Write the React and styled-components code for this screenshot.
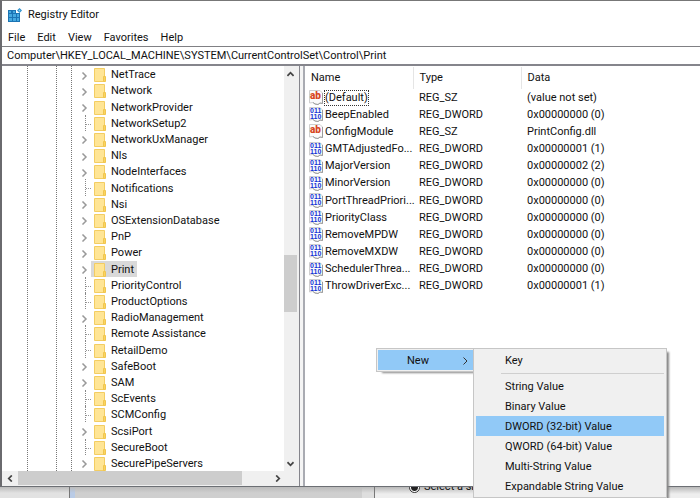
import React, { useState } from 'react';
import styled, { createGlobalStyle, css } from 'styled-components';

const GlobalStyle = createGlobalStyle`
    * {
        box-sizing: border-box;
    }
    body {
        margin: 0;
        overflow: hidden;
        font-family: Roboto, "Noto Sans", sans-serif;
        font-size: 11px;
        line-height: 16px;
        color: #111;
    }
    button, input {
        font: inherit;
        color: inherit;
    }
    svg {
        flex: none;
    }
`;

const Desktop = styled.div`
    position: relative;
    height: 100vh;
    display: flex;
    flex-direction: column;
    overflow: hidden;
    background: #d4d4d4;
`;

const EditorWindow = styled.main`
    flex: 1;
    min-height: 0;
    display: flex;
    flex-direction: column;
    border-top: 1px solid #777;
    border-left: 2px solid #6a6a6e;
    border-bottom: 1px solid #6c6f74;
    background: #fff;
`;

const TitleBar = styled.header`
    display: flex;
    align-items: center;
    gap: 5px;
    height: 27px;
    padding-left: 6px;
`;

const Title = styled.h1`
    margin: 0;
    font-size: 11px;
    font-weight: 400;
`;

const MenuBar = styled.nav`
    display: flex;
    align-items: center;
    gap: 12px;
    height: 18px;
    padding: 2px 0 0 6px;
`;

const MenuButton = styled.button`
    padding: 0;
    border: none;
    background: none;
`;

const AddressInput = styled.input`
    width: 100%;
    height: 20px;
    padding: 0 5px;
    border: solid #808084;
    border-width: 1px 0 2px;
    border-bottom-color: #85858c;
    background: #fff;
    outline: none;
`;

const Panes = styled.div`
    flex: 1;
    min-height: 0;
    display: flex;
`;

const TreePane = styled.section`
    flex: 0 0 298px;
    display: grid;
    grid-template-columns: 1fr 15px;
    grid-template-rows: 1fr 14px;
    padding-bottom: 1px;
    border-right: 1px solid #85858c;
    background: #f0f0f0;
`;

const TreeView = styled.div`
    min-height: 0;
    display: flex;
    padding-left: 25px;
    overflow: hidden;
    background: #fff;
`;

const Guide = styled.div`
    flex: 1;
    display: flex;
    padding-left: ${({ $indent }) => $indent}px;
    border-left: 1px dotted #777;
`;

const KeyList = styled.ul`
    flex: 1;
    display: flex;
    flex-direction: column;
    margin: 0;
    padding: 0;
    list-style: none;
`;

const KeyRow = styled.li`
    flex: 1 1 0;
    min-height: 16px;
    display: flex;
    align-items: center;
`;

const Expander = styled.button`
    display: flex;
    width: 12px;
    padding: 3px 0 0 1px;
    border: none;
    background: none;
`;

const Branch = styled.span`
    align-self: stretch;
    width: 6px;
    margin-left: 6px;
    border-left: 1px dotted #888;
    background: linear-gradient(90deg, #999 1px, transparent 1px) 0 9px / 2px 1px repeat-x;
`;

const KeyName = styled.span`
    display: flex;
    align-items: center;
    gap: 5px;
    height: 16px;
    padding: 2px 3px 0;
    background: ${({ $selected }) => ($selected ? '#d9d9d9' : 'transparent')};
`;

const VerticalBar = styled.div`
    display: flex;
    flex-direction: column;
    align-items: stretch;
    padding-right: 2px;
`;

const HorizontalBar = styled.div`
    display: flex;
    padding-right: 14px;
    grid-column: 1 / -1;
`;

const ArrowButton = styled.button`
    flex: 0 0 16px;
    display: flex;
    align-items: center;
    justify-content: center;
    padding: 0;
    border: none;
    background: none;
`;

const Track = styled.span`
    flex: ${({ $share }) => $share} 1 0;
`;

const Thumb = styled.span`
    flex: ${({ $share }) => $share} 1 0;
    background: #cdcdcd;
`;

const Splitter = styled.div`
    flex: 0 0 5px;
    border-right: 2px solid #a9abb2;
    background: #f4f4f4;
`;

const ValuePane = styled.section`
    flex: 1;
    min-width: 0;
    padding-top: 1px;
    overflow: hidden;
`;

const ValueTable = styled.table`
    width: 100%;
    height: 228px;
    border-collapse: collapse;
    table-layout: fixed;
`;

const HeadCell = styled.th`
    width: ${({ $width }) => ($width ? `${$width}px` : 'auto')};
    height: 22px;
    padding: 0 6px;
    border-right: ${({ $width }) => ($width ? '1px solid #e5e5e5' : 'none')};
    font-weight: 400;
    text-align: left;
`;

const Cell = styled.td`
    padding: 0 6px;
    white-space: nowrap;
`;

const NameCell = styled(Cell)`
    padding: 0 0 0 4px;
`;

const ValueName = styled.div`
    display: flex;
    align-items: center;
    gap: 1px;
    height: 17px;
`;

const ValueText = styled.span`
    padding: 0 1px;
    ${({ $focused }) => $focused && css`
        outline: 1px dotted #333;
        outline-offset: -1px;
    `}
`;

const ContextMenu = styled.div`
    position: absolute;
    top: 348px;
    left: 376px;
    display: flex;
    align-items: flex-start;
`;

const MenuPanel = styled.div`
    width: ${({ $width }) => $width}px;
    padding: 1px ${({ $open }) => ($open ? 0 : 2)}px 1px ${({ $open }) => ($open ? 1 : 2)}px;
    border: 1px solid #c6c6c6;
    border-right-width: ${({ $open }) => ($open ? 0 : 1)}px;
    background: #f0f0f0;
    box-shadow: ${({ $open }) => ($open ? '5px 2px 2px -1px' : '3px 3px 2px -1px')} #888;
`;

const MenuItem = styled.button`
    display: flex;
    align-items: center;
    justify-content: space-between;
    width: 100%;
    height: 20px;
    padding: 2px 4px 0 29px;
    border: none;
    background: ${({ $active }) => ($active ? '#91c9f7' : 'transparent')};
    text-align: left;
`;

const MenuDivider = styled.hr`
    height: 1px;
    margin: 3px 0 2px 25px;
    border: none;
    background: #cfcfcf;
`;

const BackgroundStrip = styled.footer`
    flex: 0 0 11px;
    display: flex;
    overflow: hidden;
    background: linear-gradient(#b4b4b4, #d2d2d2 6px);
`;

const StripPart = styled.div`
    flex: 0 0 ${({ $width }) => $width}px;
    border-right: ${({ $edge }) => ($edge ? '1px solid #777' : 'none')};
    background: linear-gradient(#bbb, ${({ $tone }) => $tone} 6px);
`;

const BackgroundDialog = styled.div`
    flex: 1;
    display: flex;
    align-items: flex-end;
    padding: 0 0 3px 34px;
    background: linear-gradient(#b8b8b8, #eee 7px);
`;

const RadioLabel = styled.label`
    display: flex;
    align-items: center;
    gap: 4px;
    white-space: nowrap;
`;

const RadioInput = styled.input`
    appearance: none;
    width: 11px;
    height: 11px;
    margin: 0;
    border: 1px solid #333;
    border-radius: 50%;
    background: radial-gradient(#222 3px, #fff 4px);
`;

const keys = [
    ['NetTrace', true],
    ['Network', true],
    ['NetworkProvider', true],
    ['NetworkSetup2', false],
    ['NetworkUxManager', true],
    ['Nls', true],
    ['NodeInterfaces', true],
    ['Notifications', false],
    ['Nsi', true],
    ['OSExtensionDatabase', true],
    ['PnP', true],
    ['Power', true],
    ['Print', true],
    ['PriorityControl', false],
    ['ProductOptions', false],
    ['RadioManagement', true],
    ['Remote Assistance', false],
    ['RetailDemo', false],
    ['SafeBoot', true],
    ['SAM', true],
    ['ScEvents', false],
    ['SCMConfig', false],
    ['ScsiPort', true],
    ['SecureBoot', false],
    ['SecurePipeServers', true],
];

const values = [
    ['(Default)', 'REG_SZ', '(value not set)'],
    ['BeepEnabled', 'REG_DWORD', '0x00000000 (0)'],
    ['ConfigModule', 'REG_SZ', 'PrintConfig.dll'],
    ['GMTAdjustedFo...', 'REG_DWORD', '0x00000001 (1)'],
    ['MajorVersion', 'REG_DWORD', '0x00000002 (2)'],
    ['MinorVersion', 'REG_DWORD', '0x00000000 (0)'],
    ['PortThreadPriori...', 'REG_DWORD', '0x00000000 (0)'],
    ['PriorityClass', 'REG_DWORD', '0x00000000 (0)'],
    ['RemoveMPDW', 'REG_DWORD', '0x00000000 (0)'],
    ['RemoveMXDW', 'REG_DWORD', '0x00000000 (0)'],
    ['SchedulerThrea...', 'REG_DWORD', '0x00000000 (0)'],
    ['ThrowDriverExc...', 'REG_DWORD', '0x00000001 (1)'],
];

const newItems = [
    'String Value',
    'Binary Value',
    'DWORD (32-bit) Value',
    'QWORD (64-bit) Value',
    'Multi-String Value',
    'Expandable String Value',
];

const AppIcon = () => (
    <svg width="15" height="14" viewBox="0 0 15 14">
        <path d="M0 2h9v3h3v9H0z" fill="#1b74b4" />
        <path d="M1 3h2v2H1zM5 3h2v2H5zM1 6h3v3H1zM5 6h3v3H5zM9 6h2v3H9zM1 10h3v3H1zM5 10h3v3H5zM9 10h2v3H9z" fill="#45a9e0" />
        <path d="M8 0h7v5H8z" fill="#fff" />
        <path d="M11.500 0L14 2.500 11.500 5 9 2.500z" fill="#2b8fcb" />
        <path d="M11.500 1.500l1 1-1 1-1-1z" fill="#8fd5f5" />
    </svg>
);

const FolderIcon = () => (
    <svg width="12" height="14" viewBox="0 0 12 14">
        <path d="M0.500 0.500h10v13h-10z" fill="#ffe595" stroke="#f3cd62" />
        <path d="M9.500 8.500h2v5h-2z" fill="#fbd35f" stroke="#f0c64f" />
    </svg>
);

const ValuePage = ({ children }) => (
    <svg width="14" height="15" viewBox="0 0 14 15">
        <path d="M0.500 0.500h10.500l2.500 2.500v10.500l-2.500-0.500-2 1.500-3-0.500-2-1.500-3.500 0.500z" fill="#fbfbfb" stroke="#cfcfcf" />
        <path d="M13.500 3v10.500l-2.500-0.500-2 1.500-3-0.500-2-1.500" fill="none" stroke="#9b9b9b" />
        {children}
    </svg>
);

const StringIcon = () => (
    <ValuePage>
        <text x="1" y="9" fontFamily="Roboto, sans-serif" fontWeight="900" fontSize="10" fill="#d8471f">ab</text>
    </ValuePage>
);

const BinaryIcon = () => (
    <ValuePage>
        <g fontFamily="Liberation Sans, sans-serif" fontWeight="700" fontSize="7" fill="#1033d6">
            <text x="1" y="6">011</text>
            <text x="1" y="12">110</text>
        </g>
    </ValuePage>
);

const Chevron = ({ turn = 0, size = 7, color = '#444', weight = 2 }) => (
    <svg width={size} height={size} viewBox="0 0 8 8">
        <path d="M2.500 0.500L6 4 2.500 7.500" transform={`rotate(${turn} 4 4)`} fill="none" stroke={color} strokeWidth={weight} />
    </svg>
);

function KeyTree({ selected, onSelect }) {
    return (
        <TreeView>
            <Guide $indent={28}>
                <Guide $indent={14}>
                    <Guide $indent={7}>
                        <KeyList>
                            {keys.map(([name, expandable]) => (
                                <KeyRow key={name}>
                                    {expandable ? (
                                        <Expander aria-label={`Expand ${name}`}>
                                            <Chevron size={8} color="#999" weight={1.5} />
                                        </Expander>
                                    ) : (
                                        <Branch />
                                    )}
                                    <KeyName $selected={name === selected} onClick={() => onSelect(name)}>
                                        <FolderIcon />
                                        {name}
                                    </KeyName>
                                </KeyRow>
                            ))}
                        </KeyList>
                    </Guide>
                </Guide>
            </Guide>
        </TreeView>
    );
}

function App() {
    const [selected, setSelected] = useState('Print');
    const [active, setActive] = useState('DWORD (32-bit) Value');
    const [path, setPath] = useState('Computer\\HKEY_LOCAL_MACHINE\\SYSTEM\\CurrentControlSet\\Control\\Print');

    return (
        <Desktop>
            <GlobalStyle />
            <EditorWindow>
                <TitleBar>
                    <AppIcon />
                    <Title>Registry Editor</Title>
                </TitleBar>
                <MenuBar>
                    {['File', 'Edit', 'View', 'Favorites', 'Help'].map((item) => (
                        <MenuButton key={item}>{item}</MenuButton>
                    ))}
                </MenuBar>
                <AddressInput aria-label="Address" value={path} onChange={(e) => setPath(e.target.value)} />
                <Panes>
                    <TreePane>
                        <KeyTree selected={selected} onSelect={setSelected} />
                        <VerticalBar>
                            <ArrowButton aria-label="Scroll up"><Chevron turn={-90} /></ArrowButton>
                            <Track $share={173} />
                            <Thumb $share={56} />
                            <Track $share={143} />
                            <ArrowButton aria-label="Scroll down"><Chevron turn={90} /></ArrowButton>
                        </VerticalBar>
                        <HorizontalBar>
                            <ArrowButton aria-label="Scroll left"><Chevron turn={180} /></ArrowButton>
                            <Thumb $share={223} />
                            <Track $share={27} />
                            <ArrowButton aria-label="Scroll right"><Chevron /></ArrowButton>
                        </HorizontalBar>
                    </TreePane>
                    <Splitter />
                    <ValuePane>
                        <ValueTable>
                            <thead>
                                <tr>
                                    <HeadCell $width={108}>Name</HeadCell>
                                    <HeadCell $width={108}>Type</HeadCell>
                                    <HeadCell>Data</HeadCell>
                                </tr>
                            </thead>
                            <tbody>
                                {values.map(([name, type, data], index) => (
                                    <tr key={name}>
                                        <NameCell>
                                            <ValueName>
                                                {type === 'REG_SZ' ? <StringIcon /> : <BinaryIcon />}
                                                <ValueText $focused={index === 0}>{name}</ValueText>
                                            </ValueName>
                                        </NameCell>
                                        <Cell>{type}</Cell>
                                        <Cell>{data}</Cell>
                                    </tr>
                                ))}
                            </tbody>
                        </ValueTable>
                    </ValuePane>
                </Panes>
            </EditorWindow>
            <BackgroundStrip>
                <StripPart $width={70} $tone="#e2e2e2" $edge />
                <StripPart $width={5} $tone="#b9cbe6" />
                <StripPart $width={287} $tone="#cfcfcf" />
                <StripPart $width={13} $tone="#dedede" $edge />
                <BackgroundDialog>
                    <RadioLabel>
                        <RadioInput type="radio" name="printer" defaultChecked />
                        Select a sh
                    </RadioLabel>
                </BackgroundDialog>
            </BackgroundStrip>
            <ContextMenu>
                <MenuPanel $width={97} $open>
                    <MenuItem $active>
                        New
                        <Chevron size={8} color="#333" weight={1} />
                    </MenuItem>
                </MenuPanel>
                <MenuPanel $width={194}>
                    <MenuItem onMouseEnter={() => setActive('Key')} $active={active === 'Key'}>Key</MenuItem>
                    <MenuDivider />
                    {newItems.map((item) => (
                        <MenuItem key={item} onMouseEnter={() => setActive(item)} $active={active === item}>
                            {item}
                        </MenuItem>
                    ))}
                </MenuPanel>
            </ContextMenu>
        </Desktop>
    );
}

export default App;
